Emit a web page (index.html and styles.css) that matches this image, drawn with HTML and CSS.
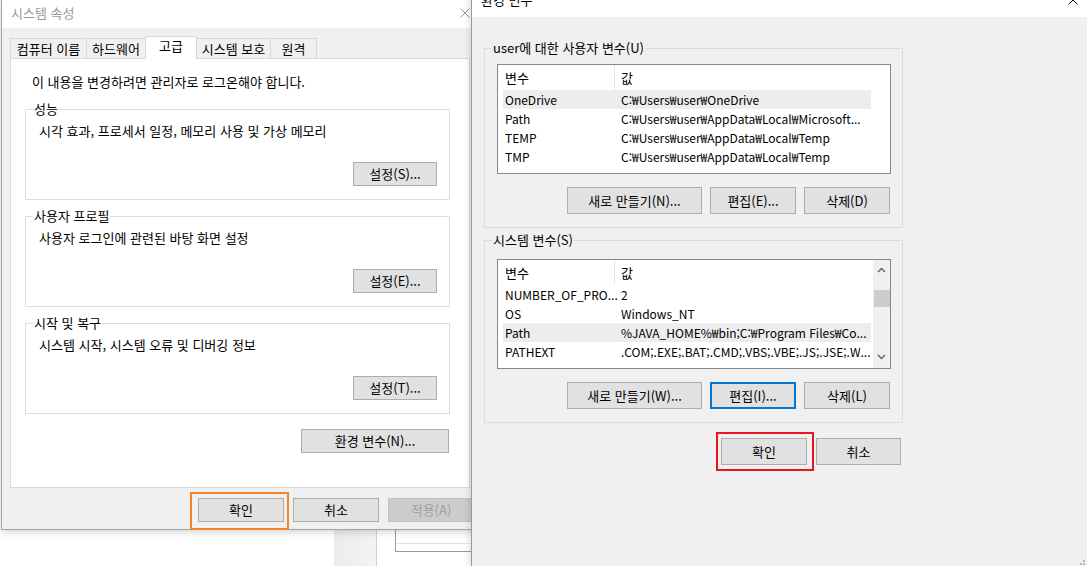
FILE: index.html
```html
<!DOCTYPE html>
<html lang="ko">
<head>
    <meta charset="UTF-8">
    <title>시스템 속성 - 환경 변수</title>
    <link rel="stylesheet" href="styles.css">
</head>
<body>
    <!-- window left behind the two dialogs -->
    <div class="bg-window">
        <div class="bg-side"></div>
        <div class="bg-main">
            <div class="bg-box"><div class="bg-rule"></div></div>
        </div>
    </div>

    <div class="dialog sys-dialog">
        <div class="titlebar">
            <span class="title">시스템 속성</span>
            <svg class="close" width="10" height="10" viewBox="0 0 10 10"><path d="M0.5 0.5L9.5 9.5M9.5 0.5L0.5 9.5" stroke="currentColor" stroke-width="1"/></svg>
        </div>
        <div class="dialog-body">
            <div class="tabs">
                <div class="tab tab-name">컴퓨터 이름</div>
                <div class="tab tab-hw">하드웨어</div>
                <div class="tab tab-adv active">고급</div>
                <div class="tab tab-prot">시스템 보호</div>
                <div class="tab tab-remote">원격</div>
            </div>
            <div class="tab-panel">
                <p class="notice">이 내용을 변경하려면 관리자로 로그온해야 합니다.</p>
                <div class="group">
                    <span class="legend">성능</span>
                    <p class="desc">시각 효과, 프로세서 일정, 메모리 사용 및 가상 메모리</p>
                    <div class="group-actions"><button class="btn">설정(S)...</button></div>
                </div>
                <div class="group">
                    <span class="legend">사용자 프로필</span>
                    <p class="desc">사용자 로그인에 관련된 바탕 화면 설정</p>
                    <div class="group-actions"><button class="btn">설정(E)...</button></div>
                </div>
                <div class="group">
                    <span class="legend">시작 및 복구</span>
                    <p class="desc">시스템 시작, 시스템 오류 및 디버깅 정보</p>
                    <div class="group-actions"><button class="btn">설정(T)...</button></div>
                </div>
                <div class="panel-actions"><button class="btn btn-env">환경 변수(N)...</button></div>
            </div>
            <div class="dialog-actions">
                <span class="mark mark-orange"><button class="btn btn-ok">확인</button></span>
                <button class="btn btn-ok">취소</button>
                <button class="btn btn-ok" disabled>적용(A)</button>
            </div>
        </div>
    </div>

    <div class="dialog env-dialog">
        <div class="titlebar">
            <span class="title">환경 변수</span>
            <svg class="close" width="10" height="10" viewBox="0 0 10 10"><path d="M0.5 0.5L9.5 9.5M9.5 0.5L0.5 9.5" stroke="currentColor" stroke-width="1"/></svg>
        </div>
        <div class="env-body">
            <div class="group env-group">
                <span class="legend">user에 대한 사용자 변수(U)</span>
                <div class="listview">
                    <div class="lv-main">
                        <div class="lv-head">
                            <div class="cell c1">변수</div>
                            <div class="cell c2">값</div>
                        </div>
                        <div class="lv-row selected"><div class="cell c1">OneDrive</div><div class="cell c2">C:₩Users₩user₩OneDrive</div></div>
                        <div class="lv-row"><div class="cell c1">Path</div><div class="cell c2">C:₩Users₩user₩AppData₩Local₩Microsoft...</div></div>
                        <div class="lv-row"><div class="cell c1">TEMP</div><div class="cell c2">C:₩Users₩user₩AppData₩Local₩Temp</div></div>
                        <div class="lv-row"><div class="cell c1">TMP</div><div class="cell c2">C:₩Users₩user₩AppData₩Local₩Temp</div></div>
                    </div>
                    <div class="lv-gutter"></div>
                </div>
                <div class="env-actions">
                    <button class="btn btn-lg btn-new">새로 만들기(N)...</button>
                    <button class="btn btn-lg">편집(E)...</button>
                    <button class="btn btn-lg">삭제(D)</button>
                </div>
            </div>

            <div class="group env-group sys-group">
                <span class="legend">시스템 변수(S)</span>
                <div class="listview">
                    <div class="lv-main">
                        <div class="lv-head">
                            <div class="cell c1">변수</div>
                            <div class="cell c2">값</div>
                        </div>
                        <div class="lv-row"><div class="cell c1">NUMBER_OF_PRO...</div><div class="cell c2">2</div></div>
                        <div class="lv-row"><div class="cell c1">OS</div><div class="cell c2">Windows_NT</div></div>
                        <div class="lv-row selected"><div class="cell c1">Path</div><div class="cell c2">%JAVA_HOME%₩bin;C:₩Program Files₩Co...</div></div>
                        <div class="lv-row"><div class="cell c1">PATHEXT</div><div class="cell c2">.COM;.EXE;.BAT;.CMD;.VBS;.VBE;.JS;.JSE;.W...</div></div>
                    </div>
                    <div class="lv-gutter scrollbar">
                        <svg class="arrow" width="9" height="6" viewBox="0 0 9 6"><path d="M1 5L4.5 1.5L8 5" fill="none" stroke="#606060" stroke-width="1.4"/></svg>
                        <div class="thumb"></div>
                        <svg class="arrow arrow-down" width="9" height="6" viewBox="0 0 9 6"><path d="M1 1L4.5 4.5L8 1" fill="none" stroke="#606060" stroke-width="1.4"/></svg>
                    </div>
                </div>
                <div class="env-actions">
                    <button class="btn btn-lg btn-new">새로 만들기(W)...</button>
                    <button class="btn btn-lg btn-focus">편집(I)...</button>
                    <button class="btn btn-lg">삭제(L)</button>
                </div>
            </div>

            <div class="env-footer">
                <span class="mark mark-red"><button class="btn btn-lg btn-ok">확인</button></span>
                <button class="btn btn-lg btn-cancel">취소</button>
            </div>
        </div>
        <svg class="grip" width="5" height="5" viewBox="0 0 5 5"><rect x="3" y="0" width="2" height="2" fill="#b4b4b4"/><rect x="0" y="3" width="2" height="2" fill="#b4b4b4"/><rect x="3" y="3" width="2" height="2" fill="#b4b4b4"/></svg>
    </div>
</body>
</html>
```

FILE: styles.css
```css
* {
    box-sizing: border-box;
    margin: 0;
    padding: 0;
}
html, body {
    width: 1087px;
    height: 566px;
    overflow: hidden;
}
body {
    position: relative;
    background: #fff;
    font-family: "Noto Sans CJK KR", "Noto Sans", sans-serif;
    font-size: 13px;
    line-height: 16px;
    color: #000;
}
button {
    font: inherit;
    color: inherit;
}

/* window behind */
.bg-window {
    position: absolute;
    left: 334px;
    top: 420px;
    width: 300px;
    height: 146px;
    display: flex;
}
.bg-side {
    width: 43px;
    background: linear-gradient(to right, #ececec, #f3f3f3);
    border-right: 1px solid #d2d2d2;
}
.bg-main {
    flex: 1;
    background: #fff;
    padding-left: 18px;
}
.bg-box {
    width: 200px;
    height: 132px;
    border: 1px solid #9c9c9c;
    border-top: 0;
}
.bg-rule {
    height: 124px;
    border-bottom: 1px solid #e4e4e4;
}

/* dialogs */
.dialog {
    position: absolute;
    display: flex;
    flex-direction: column;
    background: #f0f0f0;
}
.titlebar {
    display: flex;
    align-items: center;
    background: #fff;
}
.title {
    flex: 1;
}
.sys-dialog {
    left: 1px;
    top: -1px;
    width: 486px;
    height: 531px;
    border: 1px solid #a3a3a3;
    box-shadow: 0 2px 8px rgba(0, 0, 0, 0.18);
}
.sys-dialog .titlebar {
    height: 28px;
    padding: 0 16px 2px 9px;
    color: #999;
}
.env-dialog {
    left: 471px;
    top: -14px;
    width: 616px;
    height: 580px;
    border-left: 1px solid #9a9a9a;
    box-shadow: -2px 0 6px rgba(0, 0, 0, 0.12);
    z-index: 2;
}
.env-dialog .titlebar {
    height: 31px;
    padding: 0 9px 3px 9px;
    color: #000;
}

/* buttons */
.btn {
    display: flex;
    align-items: center;
    justify-content: center;
    width: 84px;
    height: 24px;
    background: #e1e1e1;
    border: 1px solid #adadad;
    white-space: nowrap;
}
.btn:disabled {
    background: #cccccc;
    border-color: #bfbfbf;
    color: #a0a0a0;
}
.btn-ok {
    width: 86px;
}
.btn-env {
    width: 148px;
}
.btn-lg {
    height: 27px;
    width: 86px;
}
.btn-new {
    width: 135px;
}
.btn-cancel {
    width: 85px;
}
.btn-focus {
    border: 2px solid #0078d7;
}
.mark {
    position: relative;
    display: block;
}
.mark::after {
    content: "";
    position: absolute;
    pointer-events: none;
}
.mark-orange::after {
    left: -8px;
    right: -5px;
    top: -6px;
    bottom: -8px;
    border: 2px solid #f5852b;
}
.mark-red::after {
    left: -5px;
    right: -7px;
    top: -6px;
    bottom: -6px;
    border: 2px solid #e8171f;
}

/* system properties */
.dialog-body {
    padding: 8px 12px 0 8px;
}
.tabs {
    display: flex;
    align-items: flex-end;
    height: 22px;
}
.tab {
    height: 20px;
    border: 1px solid #d9d9d9;
    border-bottom: 0;
    margin-right: -1px;
    background: #f0f0f0;
    display: flex;
    align-items: center;
    justify-content: center;
    white-space: nowrap;
}
.tab.active {
    height: 23px;
    margin-bottom: -1px;
    padding-bottom: 4px;
    background: #fff;
    position: relative;
    z-index: 1;
}
.tab-name { width: 77px; }
.tab-hw { width: 60px; }
.tab-adv { width: 52px; }
.tab-prot { width: 75px; }
.tab-remote { width: 47px; }

.tab-panel {
    width: 460px;
    height: 430px;
    background: #fff;
    border: 1px solid #d9d9d9;
    padding: 15px 19px 0 14px;
}
.notice {
    margin-left: 7px;
}
.group {
    position: relative;
    border: 1px solid #dcdcdc;
}
.legend {
    position: absolute;
    top: -9px;
    left: 7px;
    padding: 0 1px;
    background: #fff;
    white-space: nowrap;
}
.tab-panel .group {
    margin-top: 16px;
    padding: 13px 12px 13px 13px;
}
.tab-panel .notice + .group {
    margin-top: 19px;
}
.desc {
    margin-bottom: 23px;
}
.group-actions {
    display: flex;
    justify-content: flex-end;
}
.panel-actions {
    display: flex;
    justify-content: flex-end;
    margin-top: 15px;
    padding-right: 1px;
}
.dialog-actions {
    display: flex;
    justify-content: flex-end;
    gap: 9px;
    margin-top: 10px;
}

/* environment variables */
.env-body {
    flex: 1;
    width: 431px;
    padding: 31px 0 0 12px;
}
.env-group {
    padding: 15px 11px 13px 12px;
}
.env-group .legend {
    background: #f0f0f0;
}
.sys-group {
    margin-top: 12px;
    padding-top: 18px;
}
.listview {
    display: flex;
    height: 110px;
    background: #fff;
    border: 1px solid #828790;
    font-size: 12px;
}
.lv-main {
    flex: 1;
    min-width: 0;
    padding: 0 2px 0 5px;
}
.lv-gutter {
    width: 17px;
}
.lv-head {
    display: flex;
    height: 25px;
    align-items: stretch;
    font-size: 13px;
}
.lv-row {
    display: flex;
    height: 19px;
    align-items: center;
}
.lv-row.selected {
    background: #ededed;
}
.cell {
    display: flex;
    align-items: center;
    white-space: nowrap;
}
.c1 {
    width: 112px;
    padding-left: 2px;
}
.c2 {
    flex: 1;
    min-width: 0;
    padding: 0 4px 0 6px;
    overflow: hidden;
}
.lv-head .c1 {
    border-right: 1px solid #e5e5e5;
}
.scrollbar {
    display: flex;
    flex-direction: column;
    align-items: center;
    background: #f0f0f0;
    padding: 7px 0 8px;
}
.thumb {
    width: 16px;
    height: 17px;
    margin-top: 17px;
    background: #cdcdcd;
}
.arrow-down {
    margin-top: auto;
}
.env-actions {
    display: flex;
    justify-content: flex-end;
    gap: 8px;
    margin-top: 13px;
    padding-right: 1px;
}
.env-footer {
    display: flex;
    justify-content: flex-end;
    gap: 9px;
    margin-top: 15px;
    padding-right: 2px;
}
.grip {
    position: absolute;
    right: 2px;
    bottom: 1px;
}
```
